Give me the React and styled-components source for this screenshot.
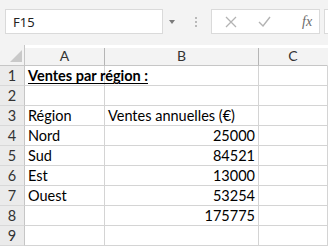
import { Fragment } from "react";
import { createGlobalStyle, styled } from "styled-components";

const GlobalStyle = createGlobalStyle`
	html, body {
		margin: 0;
		padding: 0;
		background: #ffffff;
		overflow: hidden;
	}
	body {
		font-family: "Lato", "Liberation Sans", sans-serif;
	}
`;

const Sheet = styled.div`
	width: 328px;
	height: 247px;
	display: flex;
	flex-direction: column;
	background: #ffffff;
`;

const Toolbar = styled.div`
	height: 45px;
	display: flex;
	align-items: center;
	padding-left: 5px;
	box-sizing: border-box;
	background: #f3f3f3;
	padding-bottom: 2px;
`;

const NameBox = styled.div`
	width: 158px;
	height: 25px;
	box-sizing: border-box;
	border: 1px solid #dadada;
	background: #ffffff;
	display: flex;
	align-items: center;
	padding-left: 7px;
	font-family: "Noto Sans", "Liberation Sans", sans-serif;
	font-size: 13px;
	color: #222;
`;

const DropArrow = styled.div`
	width: 0;
	height: 0;
	margin-left: 6px;
	border-left: 3px solid transparent;
	border-right: 3px solid transparent;
	border-top: 4px solid #7a7a7a;
`;

const Grip = styled.div`
	margin-left: 20px;
	display: flex;
	flex-direction: column;
	gap: 2px;
`;

const Dot = styled.span`
	width: 2px;
	height: 2px;
	background: #b9b9b9;
`;

const FormulaBox = styled.div`
	margin-left: 14px;
	width: 109px;
	height: 25px;
	box-sizing: border-box;
	border: 1px solid #dadada;
	background: #ffffff;
	display: flex;
	align-items: center;
	padding-left: 13px;
	gap: 21px;
`;

const Fx = styled.span`
	font-family: "Liberation Serif", serif;
	font-style: italic;
	font-size: 14px;
	color: #6b6b6b;
	margin-left: 10px;
`;

const InputBox = styled.div`
	margin-left: 4px;
	flex: 1;
	height: 25px;
	box-sizing: border-box;
	border: 1px solid #dadada;
	border-right: none;
	background: #ffffff;
`;

const Grid = styled.div`
	display: grid;
	grid-template-columns: 25px 80px 154px 1fr;
	grid-template-rows: 21px;
	grid-auto-rows: 20px;
`;

const Corner = styled.div`
	background: #f3f3f3;
	border-right: 1px solid #c6c6c6;
	border-bottom: 1px solid #c6c6c6;
	box-sizing: border-box;
	display: flex;
	align-items: flex-end;
	justify-content: flex-end;
	padding: 0 2px 3px 0;
`;

const Triangle = styled.div`
	width: 0;
	height: 0;
	border-left: 12px solid transparent;
	border-bottom: 12px solid #c9c9c9;
`;

const ColHead = styled.div`
	background: #f3f3f3;
	border-bottom: 1px solid #c6c6c6;
	border-right: 1px solid ${(p) => (p.$last ? "transparent" : "#b5b5b5")};
	box-sizing: border-box;
	display: flex;
	align-items: flex-end;
	justify-content: center;
	padding-bottom: 1px;
	font-family: "Lato", "Liberation Sans", sans-serif;
	font-size: 14px;
	color: #333;
	margin-top: 3px;
`;

const RowHead = styled.div`
	background: #ebebeb;
	border-bottom: 1px solid #d8d8d8;
	border-right: 1px solid #c6c6c6;
	box-sizing: border-box;
	display: flex;
	align-items: center;
	justify-content: center;
	font-family: "Lato", "Liberation Sans", sans-serif;
	font-size: 14.5px;
	color: #333;
`;

const Cell = styled.div`
	border-bottom: 1px solid #d4d4d4;
	border-right: 1px solid #d4d4d4;
	box-sizing: border-box;
	display: flex;
	align-items: center;
	justify-content: ${(p) => (p.$num ? "flex-end" : "flex-start")};
	padding: 0 3px;
	font-family: "Lato", "Liberation Sans", sans-serif;
	font-size: 14.5px;
	color: #000;
	white-space: nowrap;
	overflow: visible;
	font-weight: ${(p) => (p.$title ? 700 : 400)};
	text-decoration: ${(p) => (p.$title ? "underline" : "none")};
	text-underline-offset: 2px;
`;

const rows = [
	["Ventes par région :", "", true],
	["", ""],
	["Région", "Ventes annuelles (€)"],
	["Nord", "25000"],
	["Sud", "84521"],
	["Est", "13000"],
	["Ouest", "53254"],
	["", "175775"],
	["", ""],
];

function CrossIcon() {
	return (
		<svg width="12" height="12" viewBox="0 0 12 12">
			<path d="M1 1 L11 11 M11 1 L1 11" stroke="#b3b3b3" strokeWidth="1.3" fill="none" />
		</svg>
	);
}

function CheckIcon() {
	return (
		<svg width="13" height="11" viewBox="0 0 13 11">
			<path d="M1 6 L5 10 L12 1" stroke="#b3b3b3" strokeWidth="1.4" fill="none" />
		</svg>
	);
}

export default function App() {
	return (
		<>
			<GlobalStyle />
			<Sheet>
				<Toolbar>
					<NameBox>F15</NameBox>
					<DropArrow />
					<Grip>
						<Dot />
						<Dot />
						<Dot />
					</Grip>
					<FormulaBox>
						<CrossIcon />
						<CheckIcon />
						<Fx>fx</Fx>
					</FormulaBox>
					<InputBox />
				</Toolbar>
				<Grid>
					<Corner>
						<Triangle />
					</Corner>
					<ColHead>A</ColHead>
					<ColHead>B</ColHead>
					<ColHead $last>C</ColHead>
					{rows.map(([a, b, title], i) => (
						<Fragment key={i}>
							<RowHead>{i + 1}</RowHead>
							<Cell $title={title}>{a}</Cell>
							<Cell $num={/^\d+$/.test(b)}>{b}</Cell>
							<Cell />
						</Fragment>
					))}
				</Grid>
			</Sheet>
		</>
	);
}
